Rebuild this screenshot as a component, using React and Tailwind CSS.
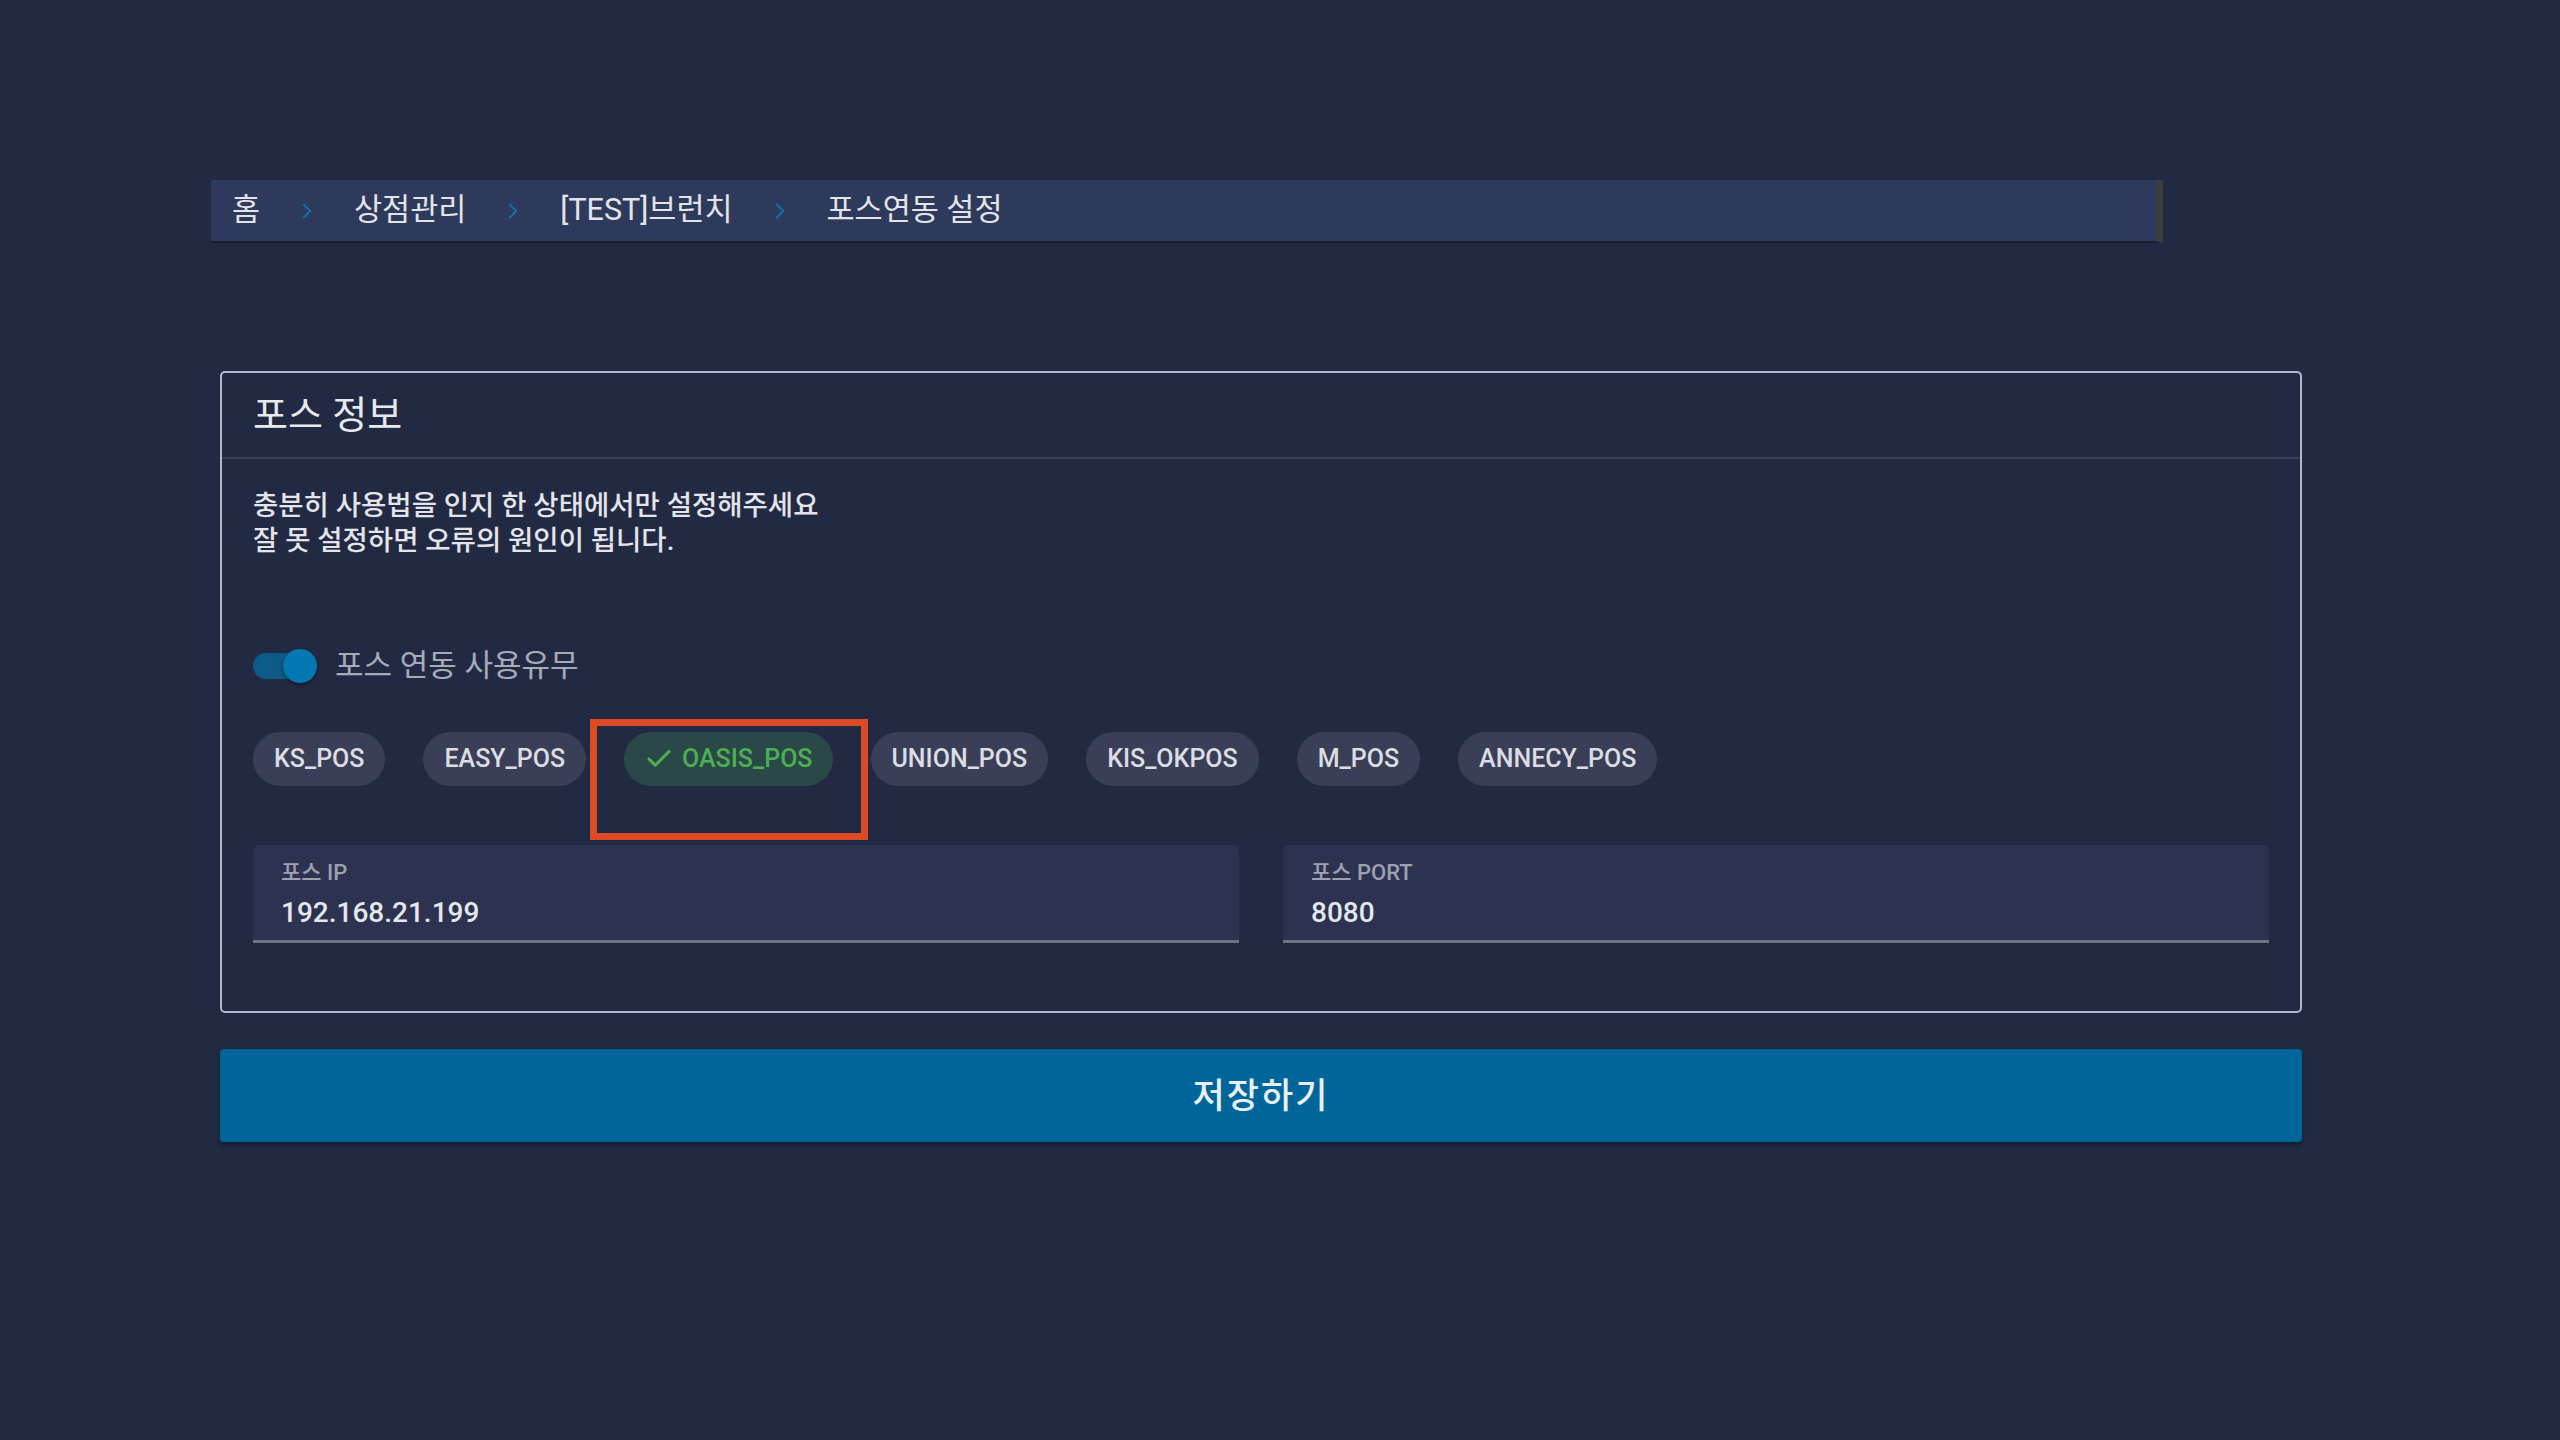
import { ChevronRight, Check } from "lucide-react";

const chips = ["KS_POS", "EASY_POS", "OASIS_POS", "UNION_POS", "KIS_OKPOS", "M_POS", "ANNECY_POS"];
const crumbs = ["홈", "상점관리", "[TEST]브런치", "포스연동 설정"];

export default function App() {
  const font = { fontFamily: 'Roboto, "Noto Sans CJK KR", sans-serif' };
  return (
    <div className="min-h-screen w-full bg-[#222a43] pl-[211px] pt-[180px]" style={font}>
      {/* Breadcrumb */}
      <div className="flex h-[63px] w-[1952px] items-center border-r-[7px] border-b-[2px] border-r-[#3d3d3f] border-b-[#191d2c] bg-[#2d3a5c] pl-[21px]">
        {crumbs.map((c, i) => (
          <div key={c} className="flex items-center">
            {i > 0 && (
              <ChevronRight className="mx-[34px] h-[26px] w-[26px] text-[#0f6ea6]" strokeWidth={2} />
            )}
            <span className="text-[30.5px] leading-none text-[#e3e4e8]">{c}</span>
          </div>
        ))}
      </div>

      {/* Card */}
      <div className="ml-[9px] mt-[128px] w-[2082px]">
        <div className="rounded-[5px] border-2 border-[#b5b9c6]">
          <div className="flex h-[86px] items-center border-b-2 border-[#363d57] px-[31px]">
            <span className="text-[38px] text-[#e8e9ed]">포스 정보</span>
          </div>

          <div className="px-[31px] pb-[68px] pt-[29px]">
            <p className="text-[27.5px] font-medium leading-[35px] text-[#e4e5ea]">
              충분히 사용법을 인지 한 상태에서만 설정해주세요
              <br />
              잘 못 설정하면 오류의 원인이 됩니다.
            </p>

            {/* Toggle */}
            <div className="mt-[88px] flex h-[40px] items-center">
              <div className="relative h-[26px] w-[62px] rounded-full bg-[#0d5b87]">
                <div className="absolute right-[-2px] top-1/2 h-[34px] w-[34px] -translate-y-1/2 rounded-full bg-[#0378b3] shadow-[0_2px_4px_rgba(0,0,0,0.4)]" />
              </div>
              <span className="ml-[20px] text-[31px] text-[#a7abb9]">포스 연동 사용유무</span>
            </div>

            {/* Chips */}
            <div className="relative mt-[46px] flex gap-[38px]">
              {chips.map((c) =>
                c === "OASIS_POS" ? (
                  <div
                    key={c}
                    className="relative flex h-[54px] items-center gap-[8px] rounded-full bg-[#2b4848] px-[20px] text-[25px] font-medium text-[#4caf50]"
                  >
                    <Check className="h-[30px] w-[30px]" strokeWidth={2.5} />
                    <span>{c}</span>
                    <div className="pointer-events-none absolute left-[-34px] top-[-13px] h-[121px] w-[278px] border-[7px] border-[#dc4a26]" />
                  </div>
                ) : (
                  <div
                    key={c}
                    className="flex h-[54px] items-center rounded-full bg-[#3a3f57] px-[21px] text-[25px] font-medium text-[#dcdde4]"
                  >
                    {c}
                  </div>
                )
              )}
            </div>

            {/* Fields */}
            <div className="mt-[59px] grid grid-cols-2 gap-[44px]">
              {[
                ["포스 IP", "192.168.21.199"],
                ["포스 PORT", "8080"],
              ].map(([label, value]) => (
                <div
                  key={label}
                  className="flex h-[98px] flex-col rounded-t-[6px] border-b-[3px] border-[#6c7186] bg-[#2d3250] px-[28px] pt-[14px]"
                >
                  <span className="text-[22px] font-medium leading-[28px] text-[#9da1b2]">{label}</span>
                  <span className="mt-[8px] text-[28px] font-medium leading-[36px] text-[#e6e7eb]">{value}</span>
                </div>
              ))}
            </div>
          </div>
        </div>

        {/* Save */}
        <button className="mt-[36px] flex h-[93px] w-full items-center justify-center rounded-[4px] bg-[#00669a] pt-[3px] text-[35px] font-medium tracking-[2px] text-[#e8f0f6] shadow-[0_3px_4px_rgba(0,0,0,0.3)]">
          저장하기
        </button>
      </div>
    </div>
  );
}
